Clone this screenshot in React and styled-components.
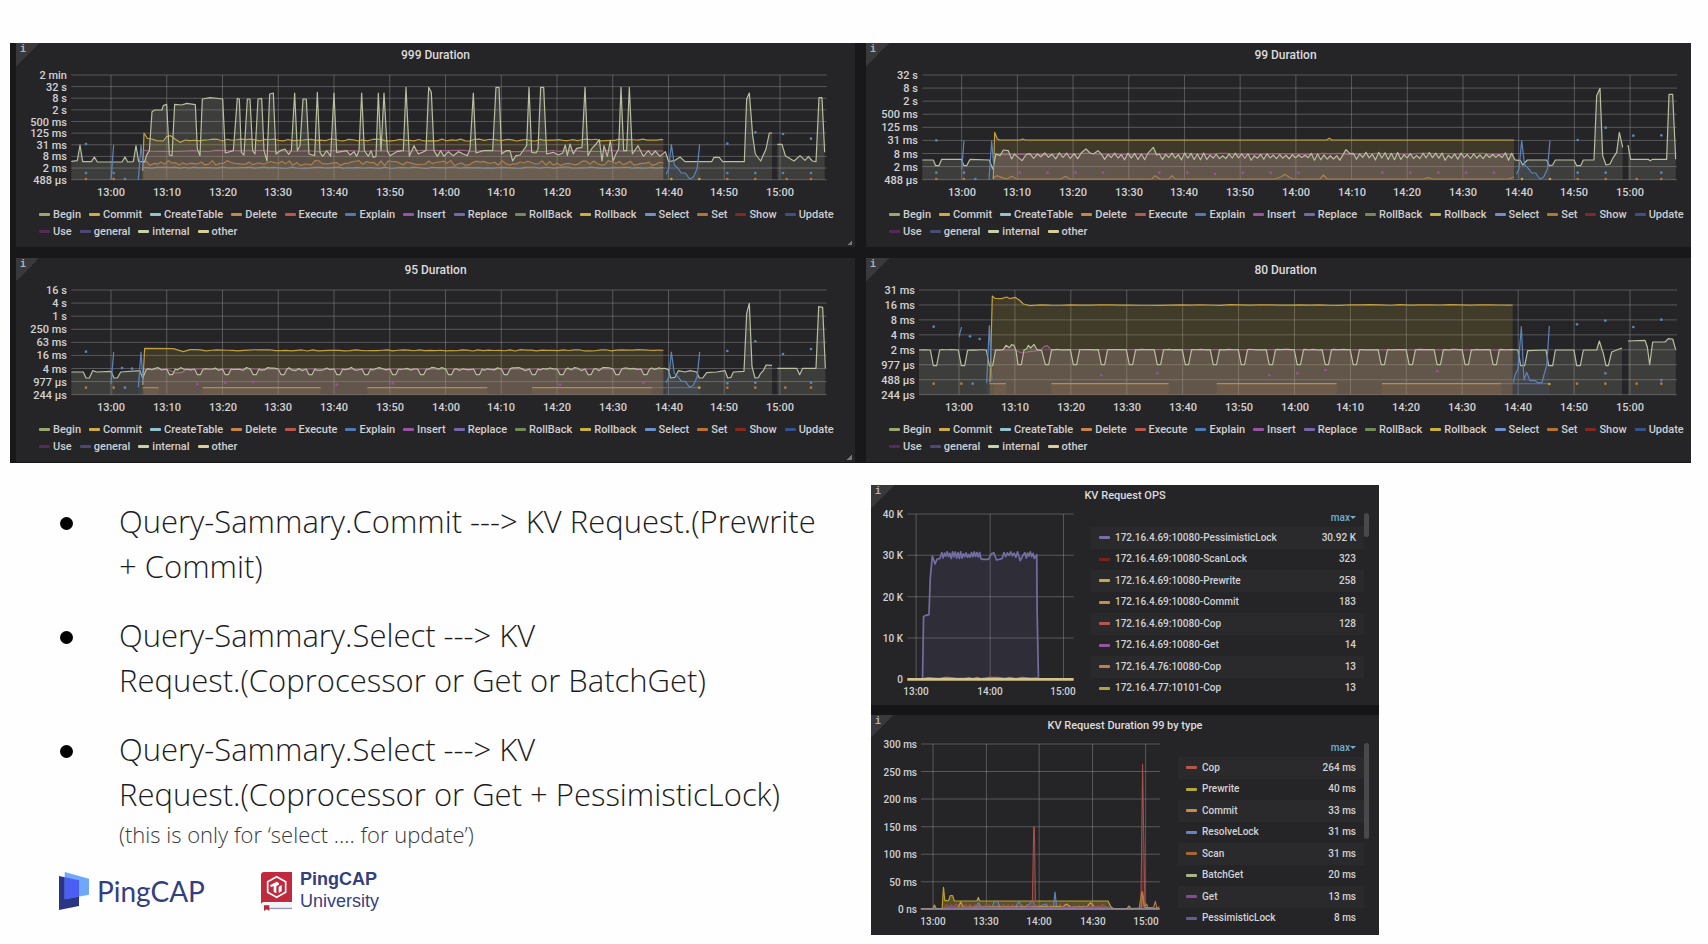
import React from "react";
import styled, { createGlobalStyle } from "styled-components";

const GlobalStyle = createGlobalStyle`
  * { box-sizing: border-box; }
  body { margin: 0; background: #fefefe; }
`;

const ui = `Roboto, "Liberation Sans", sans-serif`;

/* ---------- layout ---------- */

const Page = styled.main`
  padding: 43px 17px 10px 10px;
  color: #1d1d1f;
  font-family: ${ui};
`;

const Dashboard = styled.section`
  display: grid;
  grid-template-columns: 839fr 825fr;
  column-gap: 11px;
  row-gap: 11px;
  padding: 0 0 1px 6px;
  background: #18181a;
`;

const Lower = styled.div`
  display: grid;
  grid-template-columns: 861fr 820fr;
  margin-top: 22px;
`;

const Panel = styled.article`
  position: relative;
  min-width: 0;
  overflow: hidden;
  background: #252527;
  color: #d2d2d4;
  padding-bottom: ${(p) => p.$bottom || 0}px;
`;

const PanelTitle = styled.h2`
  margin: 0;
  padding-top: ${(p) => (p.$small ? 0 : 2)}px;
  padding-left: ${(p) => (p.$cropped ? 14 : 0)}px;
  font-size: ${(p) => (p.$small ? 11 : 12)}px;
  line-height: 21px;
  font-weight: 500;
  text-align: center;
  color: #dcdcde;
`;

const InfoCorner = styled.span`
  position: absolute;
  top: 0;
  left: 0;
  width: 23px;
  height: 23px;
  padding: 2px 0 0 4px;
  background: linear-gradient(135deg, #39393b 50%, transparent 50%);
  font: 700 10px/10px "Liberation Mono", monospace;
  color: #b4b4b6;
`;

const ResizeCorner = styled.span`
  position: absolute;
  right: 3px;
  bottom: 2px;
  width: 5px;
  height: 5px;
  background: linear-gradient(135deg, transparent 50%, #77777a 50%);
`;

const Plot = styled.svg`
  display: block;
  width: 100%;
  height: auto;
  font-family: ${ui};
  font-size: ${(p) => (p.$small ? 10 : 11)}px;
  font-weight: 500;
  fill: #d2d2d4;
`;

const Legend = styled.ul`
  display: flex;
  flex-wrap: wrap;
  column-gap: 8px;
  margin: 0;
  padding: 6px 0 0 23px;
  list-style: none;
`;

const LegendItem = styled.li`
  display: flex;
  align-items: center;
  gap: 3px;
  font-size: 11px;
  line-height: 17px;
  font-weight: 500;
  color: #cfcfd1;
`;

const Swatch = styled.i`
  display: inline-block;
  width: 11px;
  height: 3px;
  border-radius: 1px;
  background: ${(p) => p.$color};
`;

/* ---------- series geometry: three units to a pixel ---------- */

const noise = (i) => {
  const v = Math.sin(i * 127.1 + 11.7) * 43758.5453;
  return (v - Math.floor(v)) * 2 - 1;
};

const wobble = (from, to, y, amp, step) => {
  const out = [];
  for (let x = from, i = 0; x < to; x += step, i += 1) {
    out.push([x, y + noise(x + i) * amp]);
  }
  out.push([to, y]);
  return out;
};

const zigzag = (from, to, y, amp, step) => {
  const out = [];
  for (let x = from, i = 0; x <= to; x += step, i += 1) {
    out.push([x, y + (i % 2 ? amp : -amp) * (0.7 + 0.5 * noise(i))]);
  }
  return out;
};

const dips = (from, to, first, period, base, low, half, amp) => {
  const out = [];
  let x = from;
  for (let c = first; c <= to; c += period) {
    while (x < c - half - 6) {
      out.push([x, base + noise(x) * amp]);
      x += 10;
    }
    out.push([c - half, base], [c - half / 2 + 2, low], [c + half / 2 - 2, low], [c + half, base]);
    x = c + half + 6;
  }
  while (x < to) {
    out.push([x, base + noise(x) * amp]);
    x += 10;
  }
  return out;
};

const shift = (points, dx) => points.map(([x, y]) => [x + dx, y]);
const line = (points) => "M" + points.map(([x, y]) => `${x.toFixed(1)} ${y.toFixed(1)}`).join("L");
const area = (points, base) =>
  `${line(points)}L${points[points.length - 1][0]} ${base}L${points[0][0]} ${base}Z`;

const PALE = "#b7bf9f";
const GOLD = "#c4a03a";
const ORANGE = "#b5793f";
const BLUE = "#5f83b8";
const PURPLE = "#94559c";

const blueTail = (x, top, low) => [
  [x - 16, low - 14], [x - 8, low - 30], [x, top], [x + 9, low - 42], [x + 20, low - 32],
  [x + 30, low - 18], [x + 42, low - 18], [x + 55, low], [x + 66, low - 6], [x + 77, low - 30], [x + 85, top],
];

/* ---------- the four duration charts ---------- */

const durations = [
  {
    title: "999 Duration",
    width: 839, offset: 16, left: 214, right: 2480, top: 118, base: 432, ticks: [333, 167.25],
    yLabels: ["2 min", "32 s", "8 s", "2 s", "500 ms", "125 ms", "31 ms", "8 ms", "2 ms", "488 µs"],
    resize: true,
    series: [
      { color: PURPLE, fill: 0.14, points: wobble(432, 1990, 346, 2, 24) },
      { color: BLUE, fill: 0.12, points: wobble(428, 1990, 396, 2, 14) },
      { color: "#a06c3e", fill: 0.16, points: wobble(428, 1990, 382, 8, 11) },
      {
        color: GOLD, fill: 0.15,
        points: [[428, 405], [432, 292], [442, 308], [455, 310], [470, 315], [490, 316], [500, 303], [512, 300], [525, 310], [540, 320],
          ...wobble(556, 1990, 313, 3, 14)],
      },
      {
        color: PALE, fill: 0.17,
        points: [[214, 377], [232, 375], [240, 328], [248, 378], [274, 378], [283, 364], [292, 379], [366, 379], [375, 364], [383, 379],
          [400, 378], [408, 330], [416, 378], [434, 378], [440, 358], [448, 345], [456, 228], [464, 223], [486, 223], [490, 210],
          [500, 206], [508, 358], [516, 360], [524, 206], [545, 208], [560, 203], [586, 207], [592, 340], [600, 360], [607, 190],
          [630, 186], [668, 190], [676, 352], [700, 345], [712, 188], [718, 190], [724, 350], [732, 358], [742, 190], [750, 190],
          [758, 345], [765, 355], [774, 190], [785, 188], [792, 345], [801, 376], [809, 175], [820, 172], [828, 355], [840, 345],
          [855, 340], [866, 356], [874, 345], [884, 172], [892, 345], [900, 330], [909, 190], [919, 190], [927, 355], [944, 360],
          [952, 170], [960, 350], [968, 362], [980, 345], [992, 362], [1002, 172], [1010, 350], [1040, 345], [1050, 358], [1062, 348],
          [1070, 362], [1077, 345], [1085, 172], [1093, 345], [1105, 362], [1113, 345], [1120, 365], [1128, 362], [1135, 172],
          [1143, 345], [1152, 172], [1162, 345], [1170, 360], [1190, 348], [1210, 345], [1218, 155], [1228, 362], [1242, 330],
          [1255, 355], [1278, 345], [1286, 155], [1294, 170], [1302, 345],
          ...shift([[22, 362], [32, 345], [42, 362], [55, 348], [70, 360], [85, 348], [100, 355], [112, 360], [120, 340], [130, 172],
            [138, 352], [160, 345], [188, 345], [198, 155], [207, 155], [215, 355], [228, 345], [240, 345], [248, 376], [258, 360],
            [270, 358], [290, 330], [297, 155], [305, 350], [318, 352], [324, 340], [332, 155], [341, 155], [350, 355], [370, 350],
            [385, 358], [398, 352], [406, 328], [412, 360], [420, 325], [430, 355], [440, 338], [456, 335], [465, 155], [474, 360],
            [486, 338], [498, 325], [508, 312], [516, 376], [522, 330], [532, 362], [541, 315], [549, 376], [560, 350], [566, 340],
            [573, 155], [581, 345], [590, 345], [598, 155], [607, 355], [624, 330], [640, 362], [655, 345], [665, 358], [676, 346],
            [690, 362], [706, 348], [716, 378], [735, 374], [750, 364], [765, 378], [845, 378], [852, 365], [868, 365], [878, 378],
            [943, 378], [950, 190], [958, 172], [968, 300], [976, 355], [992, 376], [1008, 340], [1018, 292], [1026, 292]], 1290)],
      },
      {
        color: PALE, fill: 0.17,
        points: shift([[1042, 326], [1056, 326], [1066, 360], [1092, 376], [1110, 360], [1125, 374], [1135, 362], [1147, 376],
          [1158, 378], [1167, 186], [1176, 186], [1184, 350]], 1290),
      },
      { color: BLUE, fill: 0.12, points: [[333, 432], [341, 328]] },
      { color: BLUE, fill: 0, points: [[415, 432], [423, 328], [430, 404]] },
      { color: BLUE, fill: 0.12, points: blueTail(2014, 326, 430) },
    ],
    dots: [[258, 325, BLUE], [258, 412, BLUE], [258, 430, ORANGE], [341, 412, BLUE], [341, 430, ORANGE], [375, 430, BLUE],
      [2014, 430, GOLD], [2098, 430, GOLD], [2182, 430, ORANGE], [2266, 430, ORANGE], [2360, 430, ORANGE], [2433, 430, ORANGE],
      [2182, 324, BLUE], [2266, 290, BLUE], [2349, 295, BLUE], [2433, 309, BLUE],
      [2182, 412, BLUE], [2266, 412, BLUE], [2349, 412, BLUE], [2433, 412, BLUE]],
  },
  {
    title: "99 Duration",
    cropped: true,
    width: 825, offset: 6, left: 187, right: 2451, top: 118, base: 432, ticks: [305, 167.1],
    yLabels: ["32 s", "8 s", "2 s", "500 ms", "125 ms", "31 ms", "8 ms", "2 ms", "488 µs"],
    series: [
      { color: PURPLE, fill: 0.18, points: wobble(404, 1962, 355, 2, 24) },
      {
        color: "#a06c3e", fill: 0.1,
        points: [[398, 428], [410, 420], [425, 425], [440, 430], [455, 422], [470, 430], [600, 430], [617, 422], [630, 430], [875, 430], [885, 420],
          [900, 430], [925, 430], [937, 420], [945, 430], [1245, 430], [1262, 424], [1275, 416], [1290, 426], [1300, 430], [1380, 430], [1390, 418], [1402, 430],
          [1690, 430], [1705, 426], [1720, 430], [1945, 430], [1962, 424]],
      },
      {
        color: GOLD, fill: 0.17,
        points: [[400, 430], [404, 290], [412, 310], [420, 313], [480, 313], [488, 310], [496, 313], [1400, 313], [1408, 308], [1416, 313], [1962, 313]],
      },
      {
        color: PALE, fill: 0.17,
        points: [[187, 373], [220, 373], [227, 390], [237, 390], [245, 371], [304, 371], [312, 390], [320, 390], [330, 371], [388, 373],
          [398, 400], [408, 355], [420, 360], [430, 343], [445, 345], [455, 370], [463, 355], [486, 375], [500, 355],
          ...zigzag(510, 670, 361, 8, 11), [678, 340], [690, 352], [700, 355], [714, 345],
          ...zigzag(724, 870, 363, 9, 10), [880, 335], [890, 358], ...zigzag(898, 1440, 363, 9, 9.5),
          [1458, 342], [1470, 354], ...zigzag(1480, 1972, 362, 10, 9.5),
          ...shift([[722, 375], [728, 388], [742, 373], [800, 373], [808, 390], [818, 388], [826, 373], [882, 373], [890, 390], [902, 390],
            [910, 373], [942, 373], [950, 180], [960, 158], [968, 360], [978, 388], [990, 385], [1000, 365], [1010, 350], [1018, 290],
            [1028, 335]], 1260)],
      },
      {
        color: PALE, fill: 0.17,
        points: shift([[1044, 328], [1052, 371], [1105, 371], [1110, 375], [1118, 371], [1160, 371], [1167, 176], [1178, 176], [1187, 371]], 1260),
      },
      { color: BLUE, fill: 0.12, points: [[305, 400], [312, 315]] },
      { color: BLUE, fill: 0.1, points: [[387, 432], [395, 315], [402, 400]] },
      { color: BLUE, fill: 0.12, points: blueTail(1985, 315, 430) },
    ],
    dots: [[229, 314, BLUE], [229, 411, BLUE], [229, 430, ORANGE], [312, 411, BLUE], [312, 430, ORANGE], [346, 430, BLUE],
      [479, 411, PURPLE], [563, 411, PURPLE], [647, 411, PURPLE], [729, 411, PURPLE], [898, 411, PURPLE], [982, 411, PURPLE], [1065, 415, PURPLE],
      [1149, 411, PURPLE], [1232, 411, PURPLE], [1316, 411, PURPLE], [1567, 411, PURPLE], [1651, 411, PURPLE], [1735, 411, PURPLE], [1818, 411, PURPLE], [1902, 411, PURPLE],
      [1986, 430, GOLD], [2070, 430, GOLD], [2153, 430, ORANGE], [2237, 430, ORANGE], [2330, 430, ORANGE], [2404, 430, ORANGE],
      [2153, 313, BLUE], [2237, 276, BLUE], [2320, 300, BLUE], [2404, 299, BLUE],
      [2153, 411, BLUE], [2237, 411, BLUE], [2404, 411, BLUE]],
  },
  {
    title: "95 Duration",
    width: 839, offset: 16, left: 214, right: 2480, top: 118, base: 432, ticks: [333, 167.25],
    yLabels: ["16 s", "4 s", "1 s", "250 ms", "63 ms", "16 ms", "4 ms", "977 µs", "244 µs"],
    resize: true,
    series: [
      { color: PURPLE, fill: 0.18, points: [[432, 355], [500, 355], [525, 367], [545, 366], [560, 355], [1990, 355]] },
      { color: ORANGE, fill: 0.12, points: [[428, 411], [476, 411]] },
      { color: ORANGE, fill: 0.12, points: [[608, 411], [962, 411]] },
      { color: ORANGE, fill: 0.12, points: [[1102, 411], [1462, 411]] },
      { color: ORANGE, fill: 0.12, points: [[1596, 411], [1956, 411]] },
      { color: "#6c4573", fill: 0, points: [[1956, 411], [2095, 411]] },
      { color: GOLD, fill: 0.17, points: [[428, 403], [434, 293], [520, 294], [550, 303], ...wobble(570, 1990, 299, 2, 16)] },
      {
        color: PALE, fill: 0.17,
        points: [[214, 364], [250, 364], [258, 382], [268, 382], [278, 360], [290, 364], [333, 362], [342, 382], [352, 382], [362, 364],
          [420, 360], [428, 383], [438, 358], ...dips(445, 2006, 513, 83.7, 355, 372, 13, 5),
          ...shift([[722, 382], [735, 380], [745, 360], [765, 364], [780, 360], [800, 364], [808, 382], [818, 382], [830, 366], [860, 364],
            [885, 360], [893, 382], [903, 380], [910, 364], [942, 362], [950, 188], [958, 158], [966, 348], [975, 382], [985, 381],
            [992, 368], [1000, 360], [1008, 343], [1026, 344]], 1290)],
      },
      {
        color: PALE, fill: 0.17,
        points: shift([[1042, 353], [1100, 353], [1109, 372], [1118, 353], [1158, 353], [1166, 168], [1178, 170], [1186, 353]], 1290),
      },
      { color: BLUE, fill: 0.12, points: [[333, 400], [341, 304]] },
      { color: BLUE, fill: 0.1, points: [[415, 410], [423, 304], [430, 400]] },
      { color: BLUE, fill: 0.12, points: blueTail(2014, 304, 410) },
    ],
    dots: [[258, 303, BLUE], [258, 411, ORANGE], [341, 411, ORANGE], [375, 411, BLUE], [366, 352, BLUE], [396, 354, BLUE],
      [592, 400, PURPLE], [676, 396, PURPLE], [760, 394, PURPLE], [1010, 402, PURPLE], [1178, 398, PURPLE], [1680, 402, PURPLE], [1930, 396, PURPLE],
      [2098, 411, GOLD], [2182, 411, ORANGE], [2266, 411, ORANGE], [2356, 411, ORANGE], [2433, 411, ORANGE],
      [2182, 301, BLUE], [2266, 272, BLUE], [2349, 310, BLUE], [2433, 295, BLUE], [2182, 398, BLUE], [2266, 396, BLUE], [2433, 396, BLUE]],
  },
  {
    title: "80 Duration",
    cropped: true,
    width: 825, offset: 6, left: 177, right: 2451, top: 118, base: 432, ticks: [297, 167.75],
    yLabels: ["31 ms", "16 ms", "8 ms", "4 ms", "2 ms", "977 µs", "488 µs", "244 µs"],
    series: [
      { color: PURPLE, fill: 0.18, points: [[400, 298], [466, 298], [480, 305], [500, 304], [540, 299], [552, 288], [562, 285], [572, 296], [1958, 298]] },
      { color: ORANGE, fill: 0.12, points: [[388, 399], [438, 399]] },
      { color: ORANGE, fill: 0.12, points: [[574, 399], [926, 399]] },
      { color: ORANGE, fill: 0.12, points: [[1070, 399], [1430, 399]] },
      { color: ORANGE, fill: 0.12, points: [[1566, 399], [1924, 399]] },
      { color: "#6c4573", fill: 0, points: [[1924, 399], [2068, 399]] },
      {
        color: GOLD, fill: 0.18,
        points: [[390, 395], [397, 136], [405, 143], [425, 144], [440, 139], [450, 144], [465, 140], [478, 148], [490, 160], [510, 165],
          ...wobble(540, 1958, 163, 1, 30)],
      },
      {
        color: PALE, fill: 0.17,
        points: [[177, 298], ...dips(187, 425, 225, 84, 298, 345, 14, 1), [430, 296], [438, 284], [448, 291], [455, 282], [462, 284], [468, 300],
          [474, 342], [484, 342], [492, 298], [500, 294], [505, 284], [512, 292], [522, 281], [530, 296], [545, 300],
          ...dips(550, 1968, 561, 83.95, 297, 342, 14, 1).slice(1),
          ...shift([[714, 298], [722, 345], [734, 345], [743, 300], [798, 298], [806, 345], [818, 345], [826, 298], [882, 298], [890, 345],
            [901, 345], [910, 298], [950, 298], [958, 271], [970, 309], [978, 345], [985, 345], [995, 304], [1010, 298], [1026, 292]], 1260)],
      },
      {
        color: PALE, fill: 0.17,
        points: shift([[1044, 271], [1095, 269], [1102, 289], [1109, 342], [1118, 274], [1155, 274], [1165, 264], [1178, 265], [1187, 297]], 1260),
      },
      { color: BLUE, fill: 0, points: [[298, 258], [300, 245], [305, 229]] },
      { color: BLUE, fill: 0.1, points: [[380, 398], [388, 225], [396, 390]] },
      {
        color: BLUE, fill: 0.1,
        points: shift([[700, 396], [706, 370], [714, 355], [724, 228], [732, 388], [740, 365], [750, 390], [765, 390], [774, 396], [786, 396],
          [792, 372], [800, 345], [808, 226]], 1260),
      },
    ],
    dots: [[221, 228, BLUE], [330, 257, BLUE], [359, 265, BLUE], [221, 399, ORANGE], [304, 399, ORANGE], [338, 399, BLUE],
      [724, 374, PURPLE], [892, 368, PURPLE], [1228, 374, PURPLE], [1312, 368, PURPLE], [1396, 358, PURPLE], [1732, 362, PURPLE],
      [2068, 400, GOLD], [2151, 399, ORANGE], [2236, 399, ORANGE], [2330, 399, ORANGE], [2404, 399, ORANGE],
      [2151, 221, BLUE], [2236, 210, BLUE], [2320, 229, BLUE], [2404, 207, BLUE], [2236, 368, BLUE], [2404, 388, BLUE]],
  },
];

const statements = [
  ["Begin", "#9aa86f"], ["Commit", "#d0ab42"], ["CreateTable", "#93c4d2"], ["Delete", "#c98545"], ["Execute", "#b9574a"],
  ["Explain", "#5079b8"], ["Insert", "#9a52a3"], ["Replace", "#7668a8"], ["RollBack", "#718c54"], ["Rollback", "#cbb03c"],
  ["Select", "#6d90cf"], ["Set", "#b8742f"], ["Show", "#85281f"], ["Update", "#35538f"], ["Use", "#532a58"],
  ["general", "#4d4876"], ["internal", "#c5d3a6"], ["other", "#d9cd98"],
];

const clock = (minutes) => `${Math.floor(minutes / 60)}:${String(minutes % 60).padStart(2, "0")}`;

function Grid({ xs, ys, left, right, top, base }) {
  return (
    <g stroke="#a0a0a4" strokeOpacity="0.42" strokeWidth="3">
      {ys.map((y) => <path key={`h${y}`} d={`M${left} ${y}H${right}`} />)}
      {xs.map((x) => <path key={`v${x}`} d={`M${x} ${top}V${base}`} />)}
    </g>
  );
}

function Series({ series, base }) {
  return series.map((s, i) => (
    <g key={i}>
      {s.fill > 0 && <path d={area(s.points, base)} fill={s.color} fillOpacity={s.fill} />}
      <path d={line(s.points)} fill="none" stroke={s.color} strokeWidth={s.weight || 3.6} strokeLinejoin="round" />
    </g>
  ));
}

function DurationPanel({ chart }) {
  const { title, cropped, width, offset, left, right, top, base, ticks, yLabels, series, dots, resize } = chart;
  const toX = (x) => Math.round(x / 3 - offset);
  const toY = (y) => Math.round((y - top) / 3) + 9;
  const xs = Array.from({ length: 13 }, (_, i) => ticks[0] + ticks[1] * i);
  const ys = yLabels.map((_, i) => top + ((base - top) * i) / (yLabels.length - 1));
  return (
    <Panel $bottom={7}>
      <InfoCorner>i</InfoCorner>
      <PanelTitle $cropped={cropped}>{title}</PanelTitle>
      <Plot viewBox={`0 0 ${width} 134`} role="img" aria-label={title}>
        <g transform={`translate(${-offset} ${9 - top / 3}) scale(${1 / 3})`}>
          <Grid xs={xs} ys={ys} left={left} right={right} top={top} base={base} />
          <Series series={series} base={base} />
          {dots.map(([x, y, color], i) => <circle key={i} cx={x} cy={y} r="4" fill={color} />)}
        </g>
        {yLabels.map((label, i) => (
          <text key={label} x={toX(left) - 4} y={toY(ys[i]) + 4} textAnchor="end">{label}</text>
        ))}
        {xs.map((x, i) => (
          <text key={x} x={toX(x)} y="130" textAnchor="middle">{clock(780 + i * 10)}</text>
        ))}
      </Plot>
      <Legend>
        {statements.map(([name, color]) => (
          <LegendItem key={name}><Swatch $color={color} />{name}</LegendItem>
        ))}
      </Legend>
      {resize && <ResizeCorner />}
    </Panel>
  );
}

/* ---------- KV request panels ---------- */

const KvColumn = styled.section`
  display: flex;
  flex-direction: column;
  gap: 10px;
  max-width: 508px;
  background: #151517;
`;

const KvPanel = styled(Panel)`
  height: 220px;
`;

const KvBody = styled.div`
  display: flex;
  align-items: flex-start;
`;

const KvChart = styled.div`
  flex: none;
  width: ${(p) => p.$width}px;
`;

const KvTable = styled.table`
  flex: 1;
  height: 191px;
  margin-top: 2px;
  border-collapse: collapse;
  font-size: 10px;
  line-height: 12px;
  font-weight: 500;
  color: #d2d2d4;

  tbody tr:nth-child(odd) { background: #2a2a2d; }
  th { height: 19px; }
  td { height: 21px; }
  th, td { padding: 0 8px; font-weight: 500; text-align: left; }
  th:last-child, td:last-child { text-align: right; }
`;

const SeriesLabel = styled.span`
  display: flex;
  align-items: center;
  gap: 5px;
`;

const SortButton = styled.button`
  display: inline-flex;
  align-items: center;
  padding: 0;
  border: 0;
  background: none;
  font: 500 10px/12px ${ui};
  color: #6fb0d6;
`;

const Caret = styled.i`
  border: 3px solid transparent;
  border-top-color: currentColor;
  border-bottom: 0;
`;

const ScrollThumb = styled.div`
  flex: none;
  width: 5px;
  height: ${(p) => p.$height}px;
  margin: 7px 10px 0 0;
  border-radius: 3px;
  background: #48484d;
`;

const kvPanels = [
  {
    title: "KV Request OPS",
    chartWidth: 220, thumb: 24,
    left: 140, right: 632, top: 110, base: 606,
    xTicks: [[166, "13:00"], [385, "14:00"], [602, "15:00"]],
    yLabels: ["40 K", "30 K", "20 K", "10 K", "0"],
    series: [
      {
        color: "#746da4", fill: 0.14, weight: 5,
        points: [[185, 606], [188, 418], [194, 414], [204, 412], [208, 300], [214, 236], [222, 260], [228, 245], [236, 244],
          ...zigzag(242, 358, 234, 9, 4), [366, 246], [380, 246], [388, 230], [396, 226], [404, 248], [420, 244],
          ...zigzag(426, 466, 232, 7, 5), [474, 250], [482, 234], ...zigzag(488, 518, 234, 9, 4), [523, 232], [524, 400], [528, 606]],
      },
      { color: ORANGE, fill: 0, weight: 4, points: wobble(190, 526, 602, 2, 12) },
      { color: "#d5c38d", fill: 0, weight: 8, points: [[140, 606], [632, 606]] },
    ],
    rows: [
      ["172.16.4.69:10080-PessimisticLock", "30.92 K", "#7670a8"], ["172.16.4.69:10080-ScanLock", "323", "#7a231d"],
      ["172.16.4.69:10080-Prewrite", "258", "#c0ae42"], ["172.16.4.69:10080-Commit", "183", "#c98a4c"],
      ["172.16.4.69:10080-Cop", "128", "#b5564f"], ["172.16.4.69:10080-Get", "14", "#94559c"],
      ["172.16.4.76:10080-Cop", "13", "#bd8148"], ["172.16.4.77:10101-Cop", "13", "#aaa441"],
    ],
  },
  {
    title: "KV Request Duration 99 by type",
    chartWidth: 307, thumb: 96,
    left: 180, right: 888, top: 130, base: 626,
    xTicks: [[216, "13:00"], [374, "13:30"], [530, "14:00"], [688, "14:30"], [845, "15:00"]],
    yLabels: ["300 ms", "250 ms", "200 ms", "150 ms", "100 ms", "50 ms", "0 ns"],
    series: [
      {
        color: "#b79f35", fill: 0.35,
        points: [[180, 624], [216, 624], [220, 613], [226, 624], [243, 624], [247, 560], [251, 600], [262, 600], [267, 585], [274, 585], [279, 601],
          [346, 601], [350, 590], [354, 601], [734, 601], [742, 618], [750, 624], [790, 624], [796, 616], [802, 624], [832, 622], [836, 575], [842, 620], [886, 624]],
      },
      { color: "#a5503f", fill: 0.15, points: [[250, 618], ...zigzag(256, 730, 617, 6, 7), [740, 624]] },
      {
        color: BLUE, fill: 0.1,
        points: [[340, 624], [350, 606], [358, 620], [390, 620], [398, 602], [408, 604], [414, 622], [460, 620], [470, 602], [480, 622], [500, 612],
          [510, 600], [520, 620], [550, 610], [560, 620], [572, 622], [577, 574], [582, 622]],
      },
      { color: "#ab514a", fill: 0.3, weight: 3, points: [[510, 600], [514, 380], [516, 380], [519, 600]] },
      { color: "#ab514a", fill: 0.3, weight: 3, points: [[831, 622], [836, 190], [843, 622]] },
      { color: ORANGE, fill: 0, points: [[826, 622], [834, 572], [842, 618], [848, 610], [852, 622], [868, 622], [874, 602], [878, 622], [886, 618]] },
      { color: GOLD, fill: 0, points: [[290, 620], [298, 604], [306, 620], [600, 618], [612, 610], [622, 620], [672, 618], [682, 606], [692, 618]] },
      { color: PURPLE, fill: 0.2, points: wobble(247, 742, 620, 2, 8) },
      { color: "#8981ae", fill: 0, weight: 5, points: [[180, 625], [886, 625]] },
    ],
    rows: [
      ["Cop", "264 ms", "#b5564f"], ["Prewrite", "40 ms", "#b5a83c"], ["Commit", "33 ms", "#c98a4c"], ["ResolveLock", "31 ms", "#6585bd"],
      ["Scan", "31 ms", "#a4682f"], ["BatchGet", "20 ms", "#a9b488"], ["Get", "13 ms", "#854b91"], ["PessimisticLock", "8 ms", "#625c97"],
    ],
  },
];

/* the KV plots are slightly wider than three units to a pixel */
const KV_X = 0.338;

function KvRequestPanel({ chart }) {
  const { title, chartWidth, thumb, left, right, top, base, xTicks, yLabels, series, rows } = chart;
  const ys = yLabels.map((_, i) => top + ((base - top) * i) / (yLabels.length - 1));
  const toX = (x) => Math.round(x * KV_X) - 11;
  return (
    <KvPanel>
      <InfoCorner>i</InfoCorner>
      <PanelTitle $small>{title}</PanelTitle>
      <KvBody>
        <KvChart $width={chartWidth}>
          <Plot $small viewBox={`0 0 ${chartWidth} 198`} role="img" aria-label={title}>
            <g transform={`translate(-11 ${8 - top / 3}) scale(${KV_X} ${1 / 3})`}>
              <Grid xs={xTicks.map(([x]) => x)} ys={ys} left={left} right={right} top={top} base={base} />
              <Series series={series} base={base} />
            </g>
            {yLabels.map((label, i) => (
              <text key={label} x={toX(left) - 4} y={Math.round((ys[i] - top) / 3) + 12} textAnchor="end">{label}</text>
            ))}
            {xTicks.map(([x, label]) => (
              <text key={label} x={toX(x)} y="189" textAnchor="middle">{label}</text>
            ))}
          </Plot>
        </KvChart>
        <KvTable>
          <thead>
            <tr>
              <th scope="col" aria-label="series" />
              <th scope="col"><SortButton type="button">max<Caret /></SortButton></th>
            </tr>
          </thead>
          <tbody>
            {rows.map(([name, value, color]) => (
              <tr key={name}>
                <td><SeriesLabel><Swatch $color={color} />{name}</SeriesLabel></td>
                <td>{value}</td>
              </tr>
            ))}
          </tbody>
        </KvTable>
        <ScrollThumb $height={thumb} />
      </KvBody>
    </KvPanel>
  );
}

/* ---------- notes and brands ---------- */

const Notes = styled.section`
  padding: 14px 0 0 49px;
`;

const NoteList = styled.ul`
  display: flex;
  flex-direction: column;
  gap: 24px;
  margin: 0;
  padding: 0;
  list-style: none;
`;

const Note = styled.li`
  display: grid;
  grid-template-columns: 60px 1fr;
  font-family: "Open Sans", "Noto Sans", sans-serif;
  font-size: 31px;
  line-height: 45px;
  font-weight: 350;
  white-space: nowrap;
  color: #1c1c1e;

  &::before {
    content: "";
    width: 13px;
    height: 13px;
    margin: 18px 0 0 1px;
    border-radius: 50%;
    background: #000;
  }
`;

const Aside = styled.small`
  display: block;
  font-size: 22px;
  line-height: 34px;
  color: #3a3a3c;
`;

const Brands = styled.footer`
  display: flex;
  align-items: center;
  gap: 56px;
  margin-top: 18px;
  color: #343f80;
`;

const Brand = styled.div`
  display: flex;
  align-items: center;
  gap: 8px;
`;

const BrandName = styled.span`
  font: 400 28px/38px Lato, sans-serif;
`;

const University = styled.span`
  display: flex;
  flex-direction: column;
  font: 400 18px/24px "Liberation Sans", sans-serif;

  strong { line-height: 20px; }
`;

function PingcapMark() {
  return (
    <svg width="30" height="38" viewBox="0 0 90 114" aria-hidden="true">
      <path d="M0 12 60 25V102L0 114Z" fill="#2a3583" />
      <path d="M17 0 90 20V68L17 82Z" fill="#6fa8fa" />
      <path d="M17 16 60 25V74L17 82Z" fill="#4a5df5" />
    </svg>
  );
}

function UniversityMark() {
  return (
    <svg width="31" height="39" viewBox="0 0 93 117" aria-hidden="true">
      <path d="M10 0H93V90H10Q0 90 0 100V10Q0 0 10 0Z" fill="#c02a3c" />
      <path d="M93 93H12Q2 94 2 103T12 113H93" fill="#f4f2f6" />
      <path d="M20 109H93" stroke="#7f84b4" strokeWidth="3" />
      <path d="M9 100H25V117L17 112 9 117Z" fill="#b22a3a" />
      <path d="M47 14 74 29V61L47 76 20 61V29Z" fill="none" stroke="#fff" strokeWidth="5" />
      <path d="M27 40 47 29 54 33V38L46 42V64L38 60V42L30 46Z" fill="#fff" />
      <path d="M53 44 62 39V58L53 63Z" fill="#fff" />
    </svg>
  );
}

export default function App() {
  return (
    <>
      <GlobalStyle />
      <Page>
        <Dashboard>
          {durations.map((chart) => <DurationPanel key={chart.title} chart={chart} />)}
        </Dashboard>
        <Lower>
          <Notes>
            <NoteList>
              <Note>
                <div>Query-Sammary.Commit ---&gt; KV Request.(Prewrite<br />+ Commit)</div>
              </Note>
              <Note>
                <div>Query-Sammary.Select ---&gt; KV<br />Request.(Coprocessor or Get or BatchGet)</div>
              </Note>
              <Note>
                <div>
                  Query-Sammary.Select ---&gt; KV<br />Request.(Coprocessor or Get + PessimisticLock)
                  <Aside>(this is only for ‘select …. for update’)</Aside>
                </div>
              </Note>
            </NoteList>
            <Brands>
              <Brand><PingcapMark /><BrandName>PingCAP</BrandName></Brand>
              <Brand><UniversityMark /><University><strong>PingCAP</strong>University</University></Brand>
            </Brands>
          </Notes>
          <KvColumn>
            {kvPanels.map((chart) => <KvRequestPanel key={chart.title} chart={chart} />)}
          </KvColumn>
        </Lower>
      </Page>
    </>
  );
}
